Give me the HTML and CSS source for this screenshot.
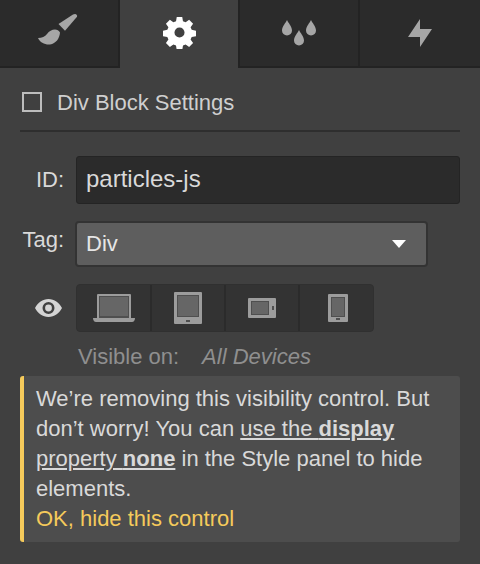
FILE: index.html
```html
<!DOCTYPE html>
<html lang="en">
<head>
<meta charset="utf-8">
<title>Div Block Settings</title>
<link rel="stylesheet" href="styles.css">
</head>
<body>
<nav class="tabs">
  <div class="tab">
    <svg class="ico brush" width="42" height="38" viewBox="0 0 42 38"><path d="M0 24c4 0 7-1.500 9-4 2-3 5-4.500 8-4.500 2 0 4 1 5 3-.5 6-4 11-10 12-5 .5-10-2-12-6.500z"/><path d="M20.500 10L27 16.700l12-14c.5-1.200-.5-2.700-2-2.700l-2 .5z"/></svg>
  </div>
  <div class="tab active">
    <svg class="ico gear" width="33" height="33" viewBox="-1 -1 36 36"><path fill-rule="evenodd" d="M14 0h6l.8 4.600 2.900 1.200 3.800-2.700 4.300 4.300-2.700 3.800 1.200 2.900 4.700.9v6l-4.700.8-1.200 2.900 2.700 3.800-4.300 4.300-3.800-2.700-2.900 1.200-.8 4.900h-6l-.8-4.900-2.900-1.200-3.800 2.700-4.300-4.300 2.700-3.800-1.200-2.900-4.700-.8v-6l4.700-.9 1.200-2.900-2.700-3.800 4.300-4.300 3.800 2.700 2.900-1.200zM17 11.500a5.500 5.500 0 1 0 0 11 5.500 5.500 0 0 0 0-11z"/></svg>
  </div>
  <div class="tab tab-drops">
    <svg class="ico" width="36" height="30" viewBox="0 0 36 30"><path d="M6 2c1 2.500 5 6.500 5 10.500a5 5 0 0 1-10 0C1 8.500 5 4.500 6 2z"/><path d="M30 2c1 2.500 5 6.500 5 10.500a5 5 0 0 1-10 0C25 8.500 29 4.500 30 2z"/><path d="M18 12c1 2.500 5 6.500 5 10.500a5 5 0 0 1-10 0c0-4 4-8 5-10.500z"/></svg>
  </div>
  <div class="tab">
    <svg class="ico" width="24" height="28" viewBox="0 0 24 28"><path d="M12 0v10h12L12 28V18H0z"/></svg>
  </div>
</nav>

<main class="panel">
  <div class="heading">
    <span class="checkbox"></span>
    <span class="heading-text">Div Block Settings</span>
  </div>

  <div class="row row-id">
    <label class="field-label">ID:</label>
    <div class="input">particles-js</div>
  </div>

  <div class="row row-tag">
    <label class="field-label tag-label">Tag:</label>
    <div class="select">
      <span>Div</span>
      <span class="caret"></span>
    </div>
  </div>

  <div class="row row-devices">
    <svg class="eye" width="27" height="18" viewBox="0 0 27 18"><path fill-rule="evenodd" d="M0 9c3-5.500 7.500-9 13.500-9S24 3.500 27 9c-3 5.500-7.500 9-13.500 9S3 14.500 0 9zm13.500-6a6 6 0 1 0 0 12 6 6 0 0 0 0-12z"/><circle cx="13.500" cy="9" r="3.400"/></svg>
    <div class="devices">
      <div class="device">
        <svg width="42" height="28" viewBox="0 0 42 28"><rect class="dev" x="4" y="0" width="34" height="25" rx="1"/><rect class="ring" x="6" y="2" width="30" height="22"/><rect class="scr" x="7" y="3" width="28" height="19"/><path class="dev" d="M0 24h42c0 2-1 4-3 4H3c-2 0-3-2-3-4z"/></svg>
      </div>
      <div class="device">
        <svg width="28" height="32" viewBox="0 0 28 32"><rect class="dev" width="28" height="32" rx="1"/><rect class="ring" x="3" y="3" width="22" height="22"/><rect class="scr" x="4" y="4" width="20" height="20"/><rect class="ring" x="12" y="28" width="4" height="2"/></svg>
      </div>
      <div class="device">
        <svg width="28" height="20" viewBox="0 0 28 20"><rect class="dev" width="28" height="20" rx="1"/><rect class="ring" x="3" y="3" width="18" height="14"/><rect class="scr" x="4" y="4" width="16" height="12"/><rect class="ring" x="24" y="8" width="2" height="4"/></svg>
      </div>
      <div class="device">
        <svg width="20" height="28" viewBox="0 0 20 28"><rect class="dev" width="20" height="28" rx="1"/><rect class="ring" x="3" y="3" width="14" height="20"/><rect class="scr" x="4" y="4" width="12" height="18"/><rect class="ring" x="8" y="24" width="4" height="2"/></svg>
      </div>
    </div>
  </div>

  <div class="visible">
    <span>Visible on:</span>
    <em>All Devices</em>
  </div>

  <aside class="notice">
    We’re removing this visibility control. But don’t worry! You can <a class="doc-link" href="#">use the <b>display</b> property <b>none</b></a> in the Style panel to hide elements.
    <a class="ok" href="#">OK, hide this control</a>
  </aside>
</main>
</body>
</html>
```

FILE: styles.css
```css
* { box-sizing: border-box; }

html, body {
  margin: 0;
  height: 100%;
}

body {
  width: 480px;
  height: 564px;
  overflow: hidden;
  background: #404040;
  font-family: "Liberation Sans", Arial, sans-serif;
  font-size: 22px;
  color: #d9d9d9;
}

.tabs {
  display: grid;
  grid-template-columns: 120px 118px 122px 120px;
  height: 68px;
}

.tab {
  display: flex;
  align-items: center;
  justify-content: center;
  background: #2b2b2b;
  border-right: 2px solid #232323;
  border-bottom: 2px solid #232323;
}

.tab:last-child { border-right: 0; }

.tab-drops { border-left: 2px solid #232323; }

.tab.active {
  background: #404040;
  border: 0;
}

.ico { fill: #a6a6a6; }
.active .ico { fill: #fff; }
.gear { margin-bottom: 3px; }

.panel {
  padding: 0 20px;
}

.heading {
  display: flex;
  align-items: center;
  gap: 15px;
  height: 64px;
  padding: 6px 0 0 2px;
  border-bottom: 2px solid #2e2e2e;
  color: #cfcfcf;
}

.heading-text { margin-top: 2px; }

.checkbox {
  width: 20px;
  height: 20px;
  border: 2px solid #bdbdbd;
}

.row {
  display: flex;
  align-items: center;
}

.row-id { margin-top: 24px; }
.row-tag { margin-top: 17px; }
.row-devices { margin-top: 17px; }

.field-label {
  width: 44px;
  margin-right: 12px;
  text-align: right;
}

.tag-label {
  margin-right: 11px;
  padding-bottom: 4px;
  margin-top: -4px;
}

.input {
  flex: 1;
  height: 48px;
  padding: 0 9px;
  line-height: 44px;
  background: #2b2b2b;
  border: 1px solid #242424;
  border-radius: 3px;
  font-size: 24px;
}

.select {
  display: flex;
  align-items: center;
  justify-content: space-between;
  width: 353px;
  height: 46px;
  padding: 0 20px 0 9px;
  background: #5e5e5e;
  border: 2px solid #333;
  border-radius: 4px;
  color: #e6e6e6;
}

.caret {
  width: 0;
  height: 0;
  border-left: 7px solid transparent;
  border-right: 7px solid transparent;
  border-top: 8px solid #fff;
}

.eye {
  fill: #d4d4d4;
  margin: 0 14px 0 15px;
  flex: none;
}

.devices {
  display: grid;
  grid-template-columns: 75px 74px 74px 75px;
  width: 298px;
  height: 48px;
  background: #333;
  border: 1px solid #303030;
  border-radius: 4px;
}

.device {
  display: flex;
  align-items: center;
  justify-content: center;
  border-right: 2px solid #2b2b2b;
}

.device:last-child { border-right: 0; }

.dev { fill: #9c9c9c; }
.ring { fill: #4f4f4f; }
.scr { fill: #666; }

.visible {
  display: flex;
  gap: 23px;
  margin: 13px 0 0 58px;
  line-height: 24px;
  color: #8f8f8f;
}

.notice {
  margin-top: 7px;
  height: 166px;
  padding: 8px 16px 0 12px;
  background: #4d4d4d;
  border-left: 4px solid #f5ca5b;
  border-radius: 3px;
  line-height: 30px;
  color: #d9d9d9;
}

.doc-link {
  color: inherit;
  text-decoration: underline;
}

.ok {
  display: block;
  color: #f5ca5b;
  text-decoration: none;
}
```
